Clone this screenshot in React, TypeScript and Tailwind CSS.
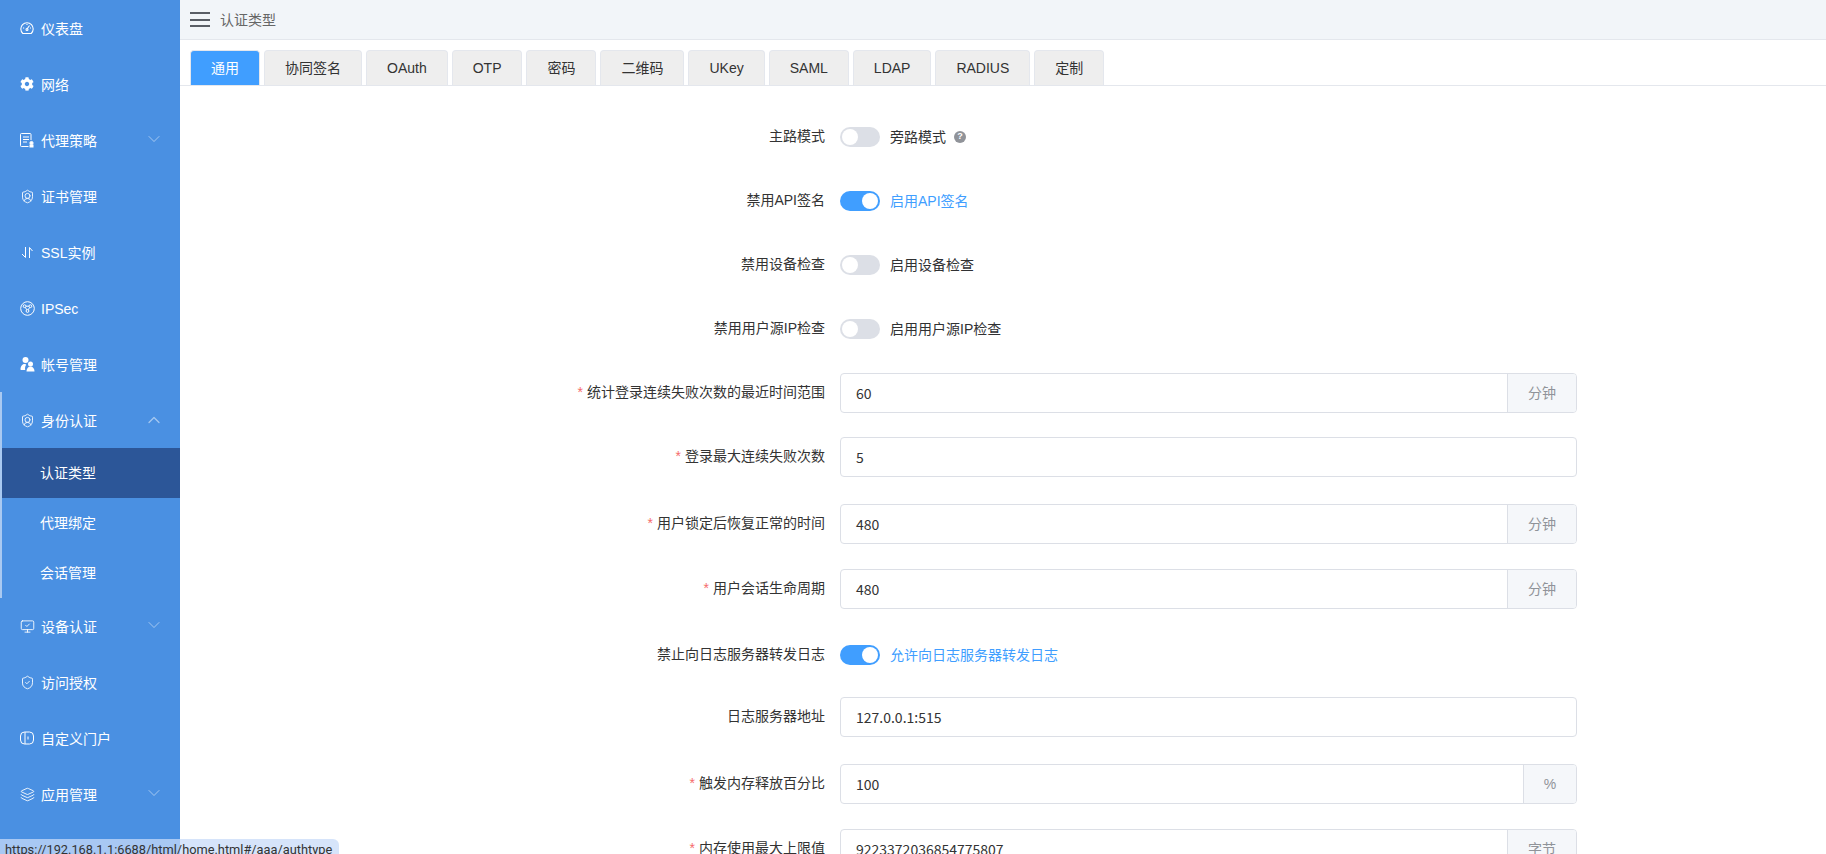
import React from 'react';
import { ChevronDown, ChevronUp, Layers, MonitorCheck, ShieldCheck, ShieldUser } from 'lucide-react';
import { FaCog } from 'react-icons/fa';

const FONT = "font-['Liberation_Sans','Noto_Sans_CJK_SC',sans-serif]";

const GaugeIcon = () => (
  <svg width="14" height="14" viewBox="0 0 14 14" fill="none" stroke="currentColor" strokeWidth="1.1">
    <path d="M2.800 12.500h8.400a6.200 6.200 0 1 0-8.400 0z" />
    <path d="M7 8l2.500-3.500M3 7h1.200M10 7h1M7 3v1" />
    <circle cx="7" cy="8.500" r="1" />
  </svg>
);

const PolicyIcon = () => (
  <svg width="15" height="15" viewBox="0 0 15 15" fill="none" stroke="currentColor" strokeWidth="1">
    <path d="M8.500 13.500H1.500a1 1 0 0 1-1-1v-11a1 1 0 0 1 1-1h8.500a1 1 0 0 1 1 1V7" />
    <path d="M3 4h6M3 6.500h6M3 9h4" />
    <circle cx="11.500" cy="10" r="1.600" fill="currentColor" />
    <rect x="9.500" y="11.500" width="4" height="3" fill="currentColor" stroke="none" />
  </svg>
);

const SwapIcon = () => (
  <svg width="15" height="15" viewBox="0 0 15 15" fill="none" stroke="currentColor" strokeWidth="1">
    <path d="M5.500 2v10.500L2 9" />
    <path d="M9.500 13V2.500L12.500 6" />
  </svg>
);

const IpsecIcon = () => (
  <svg width="15" height="15" viewBox="0 0 15 15" fill="none" stroke="currentColor" strokeWidth="1">
    <circle cx="7.500" cy="7.500" r="6.800" />
    <circle cx="4.600" cy="5.200" r="1.400" />
    <circle cx="10.400" cy="5.200" r="1.400" />
    <circle cx="7.500" cy="10" r="1.400" />
    <path d="M6 5.200h3M5.300 6.400l1.500 2.400M9.700 6.400L8.200 8.800" />
  </svg>
);

const UsersIcon = () => (
  <svg width="15" height="15" viewBox="0 0 15 15" fill="currentColor">
    <circle cx="5.500" cy="3" r="3" />
    <circle cx="10.500" cy="7" r="2.500" />
    <path d="M0.500 12.500c0-3 1.500-5.500 4-5.500 1 0 1.500.4 1.700 1-1 .8-1.400 3-1 5H1.500a1 1 0 0 1-1-.5z" />
    <path d="M6.500 14.500c0-3 1.600-5 4-5s4 2 4 5z" />
  </svg>
);

const DoorIcon = () => (
  <svg width="14" height="14" viewBox="0 0 14 14" fill="none" stroke="currentColor" strokeWidth="1">
    <rect x="0.500" y="1" width="13" height="12" rx="4" />
    <path d="M5 1v12M8 5.500v3" />
  </svg>
);

const iconProps = { size: 15, strokeWidth: 1.4 };

type MenuItem = { label: string; icon: React.ReactNode; arrow?: 'down' | 'up' };

const TOP_MENU: MenuItem[] = [
  { label: '仪表盘', icon: <GaugeIcon /> },
  { label: '网络', icon: <FaCog size={14} /> },
  { label: '代理策略', icon: <PolicyIcon />, arrow: 'down' },
  { label: '证书管理', icon: <ShieldUser {...iconProps} /> },
  { label: 'SSL实例', icon: <SwapIcon /> },
  { label: 'IPSec', icon: <IpsecIcon /> },
  { label: '帐号管理', icon: <UsersIcon /> },
];

const BOTTOM_MENU: MenuItem[] = [
  { label: '设备认证', icon: <MonitorCheck {...iconProps} />, arrow: 'down' },
  { label: '访问授权', icon: <ShieldCheck {...iconProps} /> },
  { label: '自定义门户', icon: <DoorIcon /> },
  { label: '应用管理', icon: <Layers {...iconProps} />, arrow: 'down' },
];

const TABS = ['协同签名', 'OAuth', 'OTP', '密码', '二维码', 'UKey', 'SAML', 'LDAP', 'RADIUS', '定制'];

const MenuRow = ({ item }: { item: MenuItem }) => (
  <div className="flex h-14 items-center pl-5 pr-4 text-sm text-white">
    <span className="flex w-[21px] shrink-0">{item.icon}</span>
    <span className="flex-1 pt-0.5">{item.label}</span>
    {item.arrow === 'down' && <ChevronDown size={20} strokeWidth={1} className="-mt-[3px] text-white/60" />}
    {item.arrow === 'up' && <ChevronUp size={20} strokeWidth={1.5} className="text-white/50" />}
  </div>
);

const Sidebar = () => (
  <aside className="w-[180px] shrink-0 bg-[#4a90e2]">
    {TOP_MENU.map((item) => (
      <MenuRow key={item.label} item={item} />
    ))}
    <div className="border-l-2 border-[#a9c9f1]">
      <div className="-ml-0.5">
        <MenuRow item={{ label: '身份认证', icon: <ShieldUser {...iconProps} />, arrow: 'up' }} />
      </div>
      <div className="text-sm text-white">
        <div className="flex h-[50px] items-center bg-[#2c5698] pl-[38px]">认证类型</div>
        <div className="flex h-[50px] items-center pl-[38px]">代理绑定</div>
        <div className="flex h-[50px] items-center pl-[38px]">会话管理</div>
      </div>
    </div>
    {BOTTOM_MENU.map((item) => (
      <MenuRow key={item.label} item={item} />
    ))}
  </aside>
);

const Switch = ({ on }: { on?: boolean }) => (
  <span className={`flex h-5 w-10 shrink-0 rounded-full p-0.5 ${on ? 'justify-end bg-[#409eff]' : 'bg-[#dcdfe6]'}`}>
    <span className="h-4 w-4 rounded-full bg-white" />
  </span>
);

const Row = ({
  label,
  required,
  className,
  children,
}: {
  label: string;
  required?: boolean;
  className?: string;
  children: React.ReactNode;
}) => (
  <div className={`flex h-10 items-center ${className ?? ''}`}>
    <label className="-mt-0.5 w-[660px] shrink-0 pr-[15px] text-right text-sm text-[#333]">
      {required && <span className="mr-1 text-[#f56c6c]">*</span>}
      {label}
    </label>
    {children}
  </div>
);

const SwitchRow = ({
  label,
  text,
  on,
  className,
  help,
}: {
  label: string;
  text: string;
  on?: boolean;
  className?: string;
  help?: boolean;
}) => (
  <Row label={label} className={className}>
    <Switch on={on} />
    <span className={`ml-2.5 text-sm ${on ? 'text-[#409eff]' : 'text-[#303133]'}`}>{text}</span>
    {help && (
      <span className="ml-2 flex h-3 w-3 items-center justify-center rounded-full bg-[#909399] text-[9px] font-bold text-white">
        ?
      </span>
    )}
  </Row>
);

const InputRow = ({
  label,
  value,
  unit,
  required,
  unitWidth = 'w-[69px]',
  className,
}: {
  label: string;
  value: string;
  unit?: string;
  required?: boolean;
  unitWidth?: string;
  className?: string;
}) => (
  <Row label={label} required={required} className={className}>
    <div className="flex h-10 w-[737px] overflow-hidden rounded border border-[#dcdfe6] bg-white text-sm">
      <div className="flex flex-1 items-center pl-[15px] font-['Noto_Sans_CJK_SC',sans-serif] text-[#333]">{value}</div>
      {unit && (
        <div className={`flex ${unitWidth} items-center justify-center border-l border-[#dcdfe6] bg-[#f5f7fa] text-[#909399]`}>
          {unit}
        </div>
      )}
    </div>
  </Row>
);

export default function App() {
  return (
    <div className={`relative flex h-screen overflow-hidden bg-white ${FONT}`}>
      <Sidebar />
      <main className="min-w-0 flex-1">
        <header className="flex h-10 items-center border-b border-[#e4e7ed] bg-[#f2f5f9] pl-2.5">
          <span className="flex w-5 flex-col gap-[4.500px]">
            <i className="h-0.5 bg-[#5a5e66]" />
            <i className="h-0.5 bg-[#5a5e66]" />
            <i className="h-0.5 bg-[#5a5e66]" />
          </span>
          <span className="ml-2.5 text-sm text-[#666]">认证类型</span>
        </header>

        <nav className="flex h-[46px] items-end gap-1 border-b border-[#e4e7ed] pl-2.5 text-sm text-[#333]">
          <span className="flex h-[35px] w-[70px] items-center justify-center rounded-t border border-b-0 border-[#e4e7ed] bg-[#409eff] text-white">
            通用
          </span>
          {TABS.map((tab) => (
            <span
              key={tab}
              className="flex h-[35px] items-center rounded-t border border-b-0 border-[#e4e7ed] bg-[#eeeeee] px-[20px]"
            >
              {tab}
            </span>
          ))}
        </nav>

        <form className="pt-[31px]">
          <SwitchRow label="主路模式" text="旁路模式" help />
          <SwitchRow label="禁用API签名" text="启用API签名" on className="mt-6" />
          <SwitchRow label="禁用设备检查" text="启用设备检查" className="mt-6" />
          <SwitchRow label="禁用用户源IP检查" text="启用用户源IP检查" className="mt-6" />
          <InputRow label="统计登录连续失败次数的最近时间范围" value="60" unit="分钟" required className="mt-6" />
          <InputRow label="登录最大连续失败次数" value="5" required className="mt-6" />
          <InputRow label="用户锁定后恢复正常的时间" value="480" unit="分钟" required className="mt-[27px]" />
          <InputRow label="用户会话生命周期" value="480" unit="分钟" required className="mt-[25px]" />
          <SwitchRow label="禁止向日志服务器转发日志" text="允许向日志服务器转发日志" on className="mt-[26px]" />
          <InputRow label="日志服务器地址" value="127.0.0.1:515" className="mt-[22px]" />
          <InputRow label="触发内存释放百分比" value="100" unit="%" unitWidth="w-[53px]" required className="mt-[27px]" />
          <InputRow label="内存使用最大上限值" value="9223372036854775807" unit="字节" required className="mt-[25px]" />
        </form>
      </main>

      {/* browser link preview in the corner */}
      <div className="absolute bottom-0 left-0 h-[15px] w-[339px] overflow-hidden whitespace-nowrap rounded-tr-md bg-[#c8dbf8]/75 pl-[5px] font-['Roboto',sans-serif] text-[12.800px] leading-[22px] text-[#333]">
        https://192.168.1.1:6688/html/home.html#/aaa/authtype
      </div>
    </div>
  );
}
